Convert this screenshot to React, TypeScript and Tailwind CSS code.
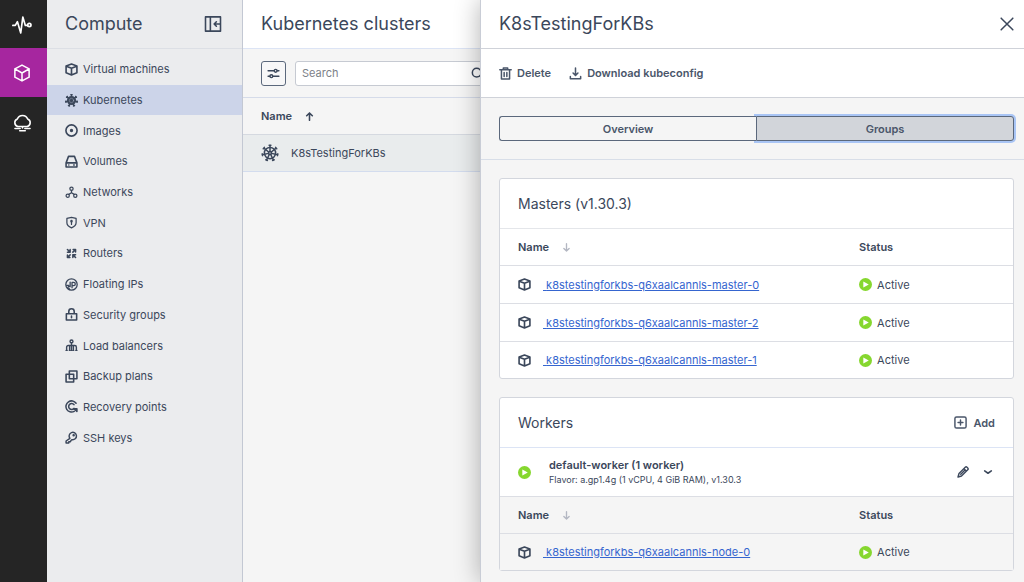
import type { ReactNode } from 'react';

type IconProps = { className?: string };

function Svg({ className = 'size-[13px]', stroke = 2.6, children }: { className?: string; stroke?: number; children: ReactNode }) {
  return (
    <svg viewBox="0 0 24 24" className={`shrink-0 ${className}`} fill="none" stroke="currentColor" strokeWidth={stroke} strokeLinecap="round" strokeLinejoin="round" aria-hidden="true">
      {children}
    </svg>
  );
}

const spokes = [0, 1, 2, 3, 4, 5, 6].map((n) => (n * 360) / 7);

const CubeIcon = ({ className }: IconProps) => (
  <Svg className={className} stroke={3}><path d="M12 2 22 5.500v12.500L12 22 2 18V5.500zM2.500 6 12 9.800 21.500 6M12 9.800V22" /></Svg>
);
const RailCubeIcon = () => (
  <Svg className="size-[18px]" stroke={2}><path d="M12 1.500 21.500 6.500v11L12 22.500 2.500 17.500v-11zM2.500 6.500 12 12l9.500-5.500M12 12v10.500" /></Svg>
);
const PulseIcon = () => (
  <Svg className="size-[20px]" stroke={2}><path d="M1 12.500h3L6.500 8l4 13.500L13 2.500l3 10h2.500" /><circle cx="20.800" cy="12" r="2" /></Svg>
);
const CloudIcon = () => (
  <Svg className="size-[19px]" stroke={2}>
    <path d="M6 17a5 5 0 0 1-.5-9.500A7 7 0 0 1 18.500 7.500 5 5 0 0 1 18 17zM12 17v2M2.500 19.500H9M15 19.500h6.500M8.500 22.500h7" />
  </Svg>
);
const WheelSolidIcon = () => (
  <Svg stroke={2.8}>
    {spokes.map((a) => <path key={a} d="M12 7V1.200M11 1.300h2" transform={`rotate(${a} 12 12)`} />)}
    <circle cx="12" cy="12" r="8.500" fill="currentColor" stroke="none" />
    <circle cx="12" cy="12" r="4" stroke="#ccd4e9" strokeWidth="0.600" />
  </Svg>
);
const WheelIcon = () => (
  <Svg className="size-[18px]" stroke={2}>
    <circle cx="12" cy="12" r="7.500" />
    <circle cx="12" cy="12" r="2" />
    {spokes.map((a) => <path key={a} d="M12 9.800V1.500M10.800 1.500h2.400" transform={`rotate(${a} 12 12)`} />)}
  </Svg>
);
const DiscIcon = () => (
  <Svg stroke={3}><circle cx="12" cy="12" r="10.300" /><circle cx="12" cy="12" r="1.600" fill="currentColor" /></Svg>
);
const DriveIcon = () => (
  <Svg stroke={2.900}><path d="M6.500 2.500h11l4.500 12v7.500H2v-7.500zM2 14.500h20M7 18.300h.1M16 18.300h1" /></Svg>
);
const NetworkIcon = () => (
  <Svg stroke={2.300}>
    <circle cx="12" cy="5" r="3" /><circle cx="5" cy="18" r="3" /><circle cx="19" cy="18" r="3" />
    <path d="M12 8v4.500M12 12.500l-5 3M12 12.500l5 3" />
  </Svg>
);
const ShieldIcon = () => (
  <Svg stroke={2.300}><path d="M12 2.500 20.500 4.500v8c0 4.500-4 7.500-8.500 9.500-4.500-2-8.500-5-8.500-9.500v-8z" /><path d="M12 11v4.500" /><circle cx="12" cy="9.500" r="1.200" fill="currentColor" /></Svg>
);
const RoutersIcon = () => (
  <Svg stroke={2.800}>
    <path d="M4.500 4.500 9 9M9.500 4.500v5h-5M14.500 9.500l5-5M15 4.500h4.500V9M9.500 14.500l-5 5M4.500 15v4.500H9M19.500 19.500l-5-5M14.500 19.500v-5h5" />
  </Svg>
);
const FloatingIpIcon = () => (
  <Svg stroke={2.400}>
    <circle cx="12" cy="12" r="10.500" />
    <path d="M3 13.500h4M9.500 7.500v8.500H6M13 18V8h3a3 3 0 0 1 0 6h-3M5 18l3 2" />
  </Svg>
);
const LockIcon = () => (
  <Svg stroke={2.900}><path d="M2.500 10.500h19v11.500h-19zM7 10.500V6.500a5 5 0 0 1 10 0v4M12 15v3" /></Svg>
);
const BalancerIcon = () => (
  <Svg stroke={2.600}>
    <circle cx="12" cy="4.500" r="2.700" />
    <path d="M12 7v13M3 20v-5a3 3 0 0 1 3-3h12a3 3 0 0 1 3 3v5M8.500 12v8M15.500 12v8" />
    <path d="M2 21h2M8 21h1M11.500 21h1M15 21h1M20 21h2" />
  </Svg>
);
const BackupIcon = () => (
  <Svg stroke={2.900}><path d="M8 2h14v14H8zM16 16v6H2V8h6M8 8h8v8" /></Svg>
);
const RecoveryIcon = () => (
  <Svg stroke={2.800}>
    <path d="M20.500 6A10.300 10.300 0 1 0 17 21M16.500 8.500a5.500 5.500 0 1 0 0 7" />
    <path d="M16 16h6v5z" fill="currentColor" />
  </Svg>
);
const KeyIcon = () => (
  <Svg stroke={2.700}><path d="M9 13.500A6.800 6.800 0 1 1 13 16l-2 1.500-1 2.500H7v2H2v-3.500z" /><circle cx="16" cy="8" r="1" fill="currentColor" /></Svg>
);
const CollapseIcon = () => (
  <Svg className="size-[18px]" stroke={2.100}><path d="M2 2.500h20v19H2zM8.500 2.500v19M20.500 12h-7M16.500 9 13.500 12l3 3" /></Svg>
);
const SlidersIcon = () => (
  <Svg className="size-[13px]" stroke={2.600}>
    <path d="M2 7h11M19 7h3M2 17h3M11 17h11" /><circle cx="16" cy="7" r="2.600" /><circle cx="8" cy="17" r="2.600" />
  </Svg>
);
const SearchIcon = () => (
  <Svg className="size-[13px]" stroke={2.800}><circle cx="10.500" cy="10.500" r="8" /><path d="m16.500 16.500 6 6" /></Svg>
);
const ArrowUpIcon = () => (
  <Svg className="size-[9px]" stroke={4.200}><path d="M12 22V3M4.500 10 12 2.500 19.500 10" /></Svg>
);
const ArrowDownIcon = () => (
  <Svg className="size-[9px] text-[#b3b7c2]" stroke={3.600}><path d="M12 2v19M5 14.500l7 7 7-7" /></Svg>
);
const TrashIcon = () => (
  <Svg stroke={2.800}><path d="M1.500 5h21M8 5V2h8v3M4.500 5v17h15V5M9.500 10v7.500M14.500 10v7.500" /></Svg>
);
const DownloadIcon = () => (
  <Svg stroke={2.800}><path d="M12 2v13M7.500 11l4.500 4.500 4.500-4.500M2.500 17.500V21.500h19v-4" /></Svg>
);
const CloseIcon = () => (
  <Svg className="size-[14px]" stroke={2.600}><path d="m2 2 20 20M22 2 2 22" /></Svg>
);
const AddIcon = () => (
  <Svg stroke={2.700}><rect x="1.700" y="1.700" width="20.600" height="20.600" rx="3" /><path d="M12 7.500v9M7.500 12h9" /></Svg>
);
const PencilIcon = () => (
  <Svg className="size-[12px]" stroke={2.800}><path d="M2 22l2-7L16.500 2.500a2.500 2.500 0 0 1 3.500 0l1.500 1.500a2.500 2.500 0 0 1 0 3.500L9 20zM14 5.500l4.500 4.500M7.500 16.500l7-7" /></Svg>
);
const ChevronIcon = () => (
  <Svg className="size-[10px]" stroke={3.800}><path d="m4 9.500 8 5.500 8-5.500" /></Svg>
);
const RunningIcon = () => (
  <svg viewBox="0 0 24 24" className="size-[13px] shrink-0" aria-hidden="true">
    <circle cx="12" cy="12" r="12" fill="#86d72f" />
    <path d="M8 6.500v11L18 12z" fill="#fff" />
  </svg>
);

const navItems = [
  { label: 'Virtual machines', icon: <CubeIcon /> },
  { label: 'Kubernetes', icon: <WheelSolidIcon />, active: true },
  { label: 'Images', icon: <DiscIcon /> },
  { label: 'Volumes', icon: <DriveIcon /> },
  { label: 'Networks', icon: <NetworkIcon /> },
  { label: 'VPN', icon: <ShieldIcon /> },
  { label: 'Routers', icon: <RoutersIcon /> },
  { label: 'Floating IPs', icon: <FloatingIpIcon /> },
  { label: 'Security groups', icon: <LockIcon /> },
  { label: 'Load balancers', icon: <BalancerIcon /> },
  { label: 'Backup plans', icon: <BackupIcon /> },
  { label: 'Recovery points', icon: <RecoveryIcon /> },
  { label: 'SSH keys', icon: <KeyIcon /> },
];

const masters = ['k8stestingforkbs-q6xaalcannls-master-0', 'k8stestingforkbs-q6xaalcannls-master-2', 'k8stestingforkbs-q6xaalcannls-master-1'];
const workers = ['k8stestingforkbs-q6xaalcannls-node-0'];

function NodeTable({ nodes, label }: { nodes: string[]; label: string }) {
  return (
    <table aria-label={label} className="w-full table-fixed border-separate border-spacing-0 text-left">
      <thead>
        <tr className="h-[37px]">
          <th className="w-[70%] border-b border-[#dcdee4] pl-[18px] font-semibold">
            <span className="flex items-center gap-[13px]">Name <ArrowDownIcon /></span>
          </th>
          <th className="border-b border-[#dcdee4] font-semibold">Status</th>
        </tr>
      </thead>
      <tbody>
        {nodes.map((name, i) => {
          const line = i < nodes.length - 1 ? 'h-[38px] border-b border-[#dcdee4]' : 'h-9';
          return (
            <tr key={name}>
              <td className={`pl-[18px] ${line}`}>
                <span className="flex items-center gap-3">
                  <CubeIcon />
                  <a href="#" className="text-[#3565cf] underline">&nbsp;{name}</a>
                </span>
              </td>
              <td className={line}>
                <span className="flex items-center gap-[5px]"><RunningIcon /> Active</span>
              </td>
            </tr>
          );
        })}
      </tbody>
    </table>
  );
}

function Sidebar() {
  return (
    <aside className="w-[196px] shrink-0 border-r border-[#c3c8d3] bg-[#ebecee]">
      <header className="flex h-[49px] items-center justify-between border-b border-[#dcdfe5] pr-5 pl-[18px]">
        <h2 className="text-[18px]">Compute</h2>
        <button type="button" aria-label="Collapse menu"><CollapseIcon /></button>
      </header>
      <nav className="mt-[5px] grid h-[399px] auto-rows-fr">
        {navItems.map((item) => (
          <a key={item.label} href="#" className={`flex items-center gap-[5px] pl-[18px] ${item.active ? 'bg-[#ccd4e9]' : ''}`}>
            {item.icon}
            {item.label}
          </a>
        ))}
      </nav>
    </aside>
  );
}

function ClusterList() {
  return (
    <main className="min-w-0 flex-1 bg-[#f5f5f5]">
      <header className="flex h-[49px] items-center border-b border-[#dce4f5] bg-white pl-[18px]">
        <h1 className="text-[18px]">Kubernetes clusters</h1>
      </header>
      <div className="flex h-[49px] items-center gap-[9px] border-b border-[#d5dbe9] pl-[18px]">
        <button type="button" aria-label="Filters" className="flex size-[25px] items-center justify-center rounded-[3px] border border-[#5b687c] bg-[#f7f7f8]">
          <SlidersIcon />
        </button>
        <label className="flex h-[25px] w-[194px] items-center rounded-[3px] border border-[#c6cad2] bg-white pr-1 pl-[6px]">
          <input type="text" placeholder="Search" aria-label="Search" className="min-w-0 flex-1 outline-none placeholder:text-[#7d8188]" />
          <SearchIcon />
        </label>
      </div>
      <table aria-label="Clusters" className="w-full border-separate border-spacing-0 text-left">
        <thead>
          <tr>
            <th className="h-[37px] border-b border-[#d5d9e0] pl-[18px] font-semibold">
              <span className="flex items-center gap-[13px]">Name <ArrowUpIcon /></span>
            </th>
          </tr>
        </thead>
        <tbody>
          <tr>
            <td className="h-[37px] border-b border-[#d3dcee] bg-[#e9eced] pl-[18px]">
              <span className="flex items-center gap-3"><WheelIcon /> K8sTestingForKBs</span>
            </td>
          </tr>
        </tbody>
      </table>
    </main>
  );
}

function ClusterDrawer() {
  return (
    <section className="absolute inset-y-0 right-0 w-17/32 border-l border-[#c9cdd6] bg-[#f5f5f5] shadow-[0_0_24px_rgba(0,0,0,0.3)]">
      <header className="flex h-[49px] items-center justify-between border-b border-[#cfd2d9] bg-white pr-[10px] pl-[18px]">
        <h2 className="text-[18px]">K8sTestingForKBs</h2>
        <button type="button" aria-label="Close"><CloseIcon /></button>
      </header>
      <div className="flex h-[49px] items-center gap-[18px] border-b border-[#cfd2d9] bg-white pl-[18px] font-semibold text-[#4a566a]">
        <button type="button" className="flex items-center gap-[5px]"><TrashIcon /> Delete</button>
        <button type="button" className="flex items-center gap-[5px]"><DownloadIcon /> Download kubeconfig</button>
      </div>
      <div className="border-b border-[#d8dee8] py-[18px] pr-[10px] pl-[18px]">
        <div role="tablist" className="flex h-[25px] font-semibold text-[#4a566a]">
          <button type="button" role="tab" aria-selected="false" className="z-10 flex-1 rounded-l-[3px] border border-r-0 border-[#5b687c] bg-[#f5f5f5]">Overview</button>
          <button type="button" role="tab" aria-selected="true" className="flex-1 rounded-r-[3px] border border-[#5b687c] bg-[#d2d5da] shadow-[0_0_0_2px_#a9c5f5]">Groups</button>
        </div>
      </div>
      <div className="flex flex-col gap-[18px] py-[18px] pr-[10px] pl-[18px]">
        <section className="rounded-[3px] border border-[#d3d6dd] bg-white">
          <h3 className="flex h-[50px] items-center border-b border-[#e4e6ea] pl-[18px] text-[14px]">Masters (v1.30.3)</h3>
          <NodeTable nodes={masters} label="Masters" />
        </section>
        <section className="rounded-[3px] border border-[#d3d6dd] bg-white">
          <header className="flex h-[50px] items-center justify-between border-b border-[#dce4f5] px-[18px]">
            <h3 className="text-[14px]">Workers</h3>
            <button type="button" className="flex items-center gap-[6px] font-semibold text-[#4a566a]"><AddIcon /> Add</button>
          </header>
          <div className="flex h-[49px] items-center border-b border-[#dcdee4] px-5 pl-[18px]">
            <RunningIcon />
            <div className="ml-[18px] flex-1">
              <p className="leading-4 font-semibold">default-worker (1 worker)</p>
              <p className="text-[9px] leading-[14px]">Flavor: a.gp1.4g (1 vCPU, 4 GiB RAM), v1.30.3</p>
            </div>
            <button type="button" aria-label="Edit group" className="mr-[14px]"><PencilIcon /></button>
            <button type="button" aria-label="Toggle group"><ChevronIcon /></button>
          </div>
          <div className="bg-[#f5f5f5]">
            <NodeTable nodes={workers} label="Workers" />
          </div>
        </section>
      </div>
    </section>
  );
}

export default function App() {
  return (
    <div className="relative flex min-h-screen overflow-hidden font-[Inter,sans-serif] text-[11px] leading-4 text-[#3b475b] [font-optical-sizing:none]">
      <nav aria-label="Services" className="flex w-[47px] shrink-0 flex-col bg-[#252525] pt-px text-white">
        <a href="#" aria-label="Monitoring" className="flex h-[47px] items-center justify-center pr-[3px]"><PulseIcon /></a>
        <a href="#" aria-label="Compute" className="flex h-[49px] items-center justify-center bg-[#a6269f] pr-[3px]"><RailCubeIcon /></a>
        <a href="#" aria-label="Cloud" className="flex h-[51px] items-center justify-center pr-[3px]"><CloudIcon /></a>
      </nav>
      <Sidebar />
      <ClusterList />
      <ClusterDrawer />
    </div>
  );
}
